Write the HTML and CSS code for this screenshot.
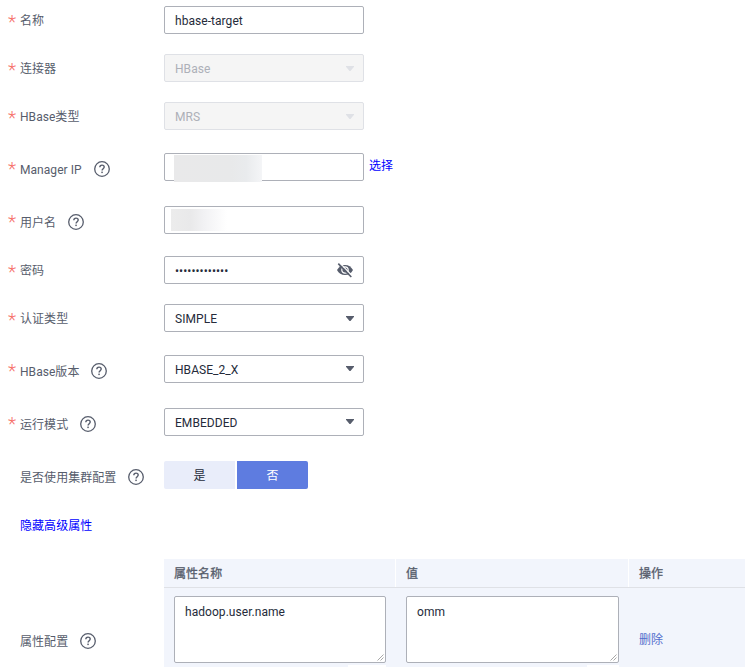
FILE: index.html
```html
<!DOCTYPE html>
<html lang="zh-CN">
<head>
<meta charset="utf-8">
<title>hbase-target</title>
<link rel="stylesheet" href="styles.css">
</head>
<body>
<svg class="defs" width="0" height="0" aria-hidden="true">
  <symbol id="help" viewBox="0 0 16 16">
    <circle cx="8" cy="8" r="7.3" fill="none" stroke="currentColor" stroke-width="1.3"/>
    <path d="M5.8 6.3C5.8 4.9 6.7 4.1 8 4.1s2.2.8 2.2 2c0 1.5-2.1 1.7-2.1 3.3" fill="none" stroke="currentColor" stroke-width="1.4"/>
    <rect x="7.3" y="10.6" width="1.5" height="1.5" fill="currentColor"/>
  </symbol>
  <symbol id="caret" viewBox="0 0 8 5">
    <path d="M0 0h8v.8L4.5 5h-1L0 .8z" fill="currentColor"/>
  </symbol>
  <symbol id="grip" viewBox="0 0 7 7">
    <path d="M.5 6.5l6-6M3.5 6.5l3-3" fill="none" stroke="currentColor" stroke-width="1"/>
  </symbol>
</svg>
<form class="form">
  <div class="row"><label class="label"><i class="req"></i>名称</label><div class="field">hbase-target</div></div>
  <div class="row"><label class="label"><i class="req"></i>连接器</label><div class="field disabled">HBase<svg class="caret"><use href="#caret"/></svg></div></div>
  <div class="row gap-23"><label class="label"><i class="req"></i>HBase类型</label><div class="field disabled">MRS<svg class="caret"><use href="#caret"/></svg></div></div>
  <div class="row gap-25"><label class="label with-help"><i class="req"></i>Manager IP<svg class="help"><use href="#help"/></svg></label><div class="field"><span class="mask mask-ip"></span></div><a class="link choose">选择</a></div>
  <div class="row gap-22"><label class="label with-help"><i class="req"></i>用户名<svg class="help"><use href="#help"/></svg></label><div class="field"><span class="mask mask-user"></span></div></div>
  <div class="row"><label class="label"><i class="req"></i>密码</label><div class="field">•••••••••••••
    <svg class="eye" viewBox="0 0 18 16"><path d="M1 8C2.7 4.7 5.5 2.9 9 2.9S15.3 4.7 17 8C15.3 11.3 12.5 13.1 9 13.1S2.7 11.3 1 8z" fill="#575d6c"/><circle cx="9" cy="8" r="3.2" fill="none" stroke="#fff" stroke-width="1.2"/><path d="M3.4.6l13 13.4" stroke="#fff" stroke-width="1.3"/><path d="M2.3 1.6l13 13.4" stroke="#575d6c" stroke-width="1.6"/></svg></div></div>
  <div class="row gap-23"><label class="label"><i class="req"></i>认证类型</label><div class="field">SIMPLE<svg class="caret"><use href="#caret"/></svg></div></div>
  <div class="row gap-25"><label class="label with-help"><i class="req"></i>HBase版本<svg class="help"><use href="#help"/></svg></label><div class="field">HBASE_2_X<svg class="caret raised"><use href="#caret"/></svg></div></div>
  <div class="row gap-25"><label class="label with-help"><i class="req"></i>运行模式<svg class="help"><use href="#help"/></svg></label><div class="field">EMBEDDED<svg class="caret raised"><use href="#caret"/></svg></div></div>
  <div class="row"><label class="label with-help">是否使用集群配置<svg class="help"><use href="#help"/></svg></label><div class="toggle"><span class="option">是</span><span class="option selected">否</span></div></div>
  <div class="row"><a class="link advanced">隐藏高级属性</a></div>
  <div class="row properties">
    <label class="label">属性配置<svg class="help"><use href="#help"/></svg></label>
    <div class="table">
      <div class="cell head">属性名称</div><div class="cell head">值</div><div class="cell head last">操作</div>
      <div class="cell"><div class="area">hadoop.user.name<svg class="grip"><use href="#grip"/></svg></div><span class="stub wide"></span></div>
      <div class="cell"><div class="area">omm<svg class="grip"><use href="#grip"/></svg></div><span class="stub"></span></div>
      <div class="cell action">删除</div>
    </div>
  </div>
</form>
</body>
</html>
```
FILE: styles.css
```css
* { box-sizing: border-box; }

body {
  margin: 0;
  height: 667px;
  overflow: hidden;
  background: #fff;
  color: #252b3a;
  font: 12px/18px Roboto, "Noto Sans CJK SC", sans-serif;
  letter-spacing: .05px;
}

.defs { position: absolute; }

.form { padding-top: 6px; }

.row {
  display: flex;
  height: 28px;
  margin-bottom: 20px;
}
.gap-22 { margin-bottom: 22px; }
.gap-23 { margin-bottom: 23px; }
.gap-25 { margin-bottom: 25px; }

.label {
  position: relative;
  display: flex;
  align-items: center;
  flex: none;
  width: 164px;
  padding: 2px 0 0 20px;
  color: #575d6c;
}
.with-help { padding-top: 5px; }

.req {
  position: absolute;
  left: 8px;
  top: 7px;
  width: 8px;
  height: 9px;
}
.req::before {
  content: "*";
  display: block;
  color: #f66f6a;
  font: 300 19px/18px Roboto, sans-serif;
}

.help {
  width: 16px;
  height: 16px;
  margin: 0 0 2px 12px;
  overflow: visible;
}

.field {
  position: relative;
  display: flex;
  align-items: center;
  flex: none;
  width: 200px;
  padding: 2px 10px 0;
  border: 1px solid #adb0b8;
  border-radius: 2px;
  background: #fff;
}
.disabled {
  border-color: #dfe1e6;
  background: #f5f5f5;
  color: #adb0b8;
}

.caret {
  width: 8px;
  height: 5px;
  margin: 0 -1px 2px auto;
  color: #575d6c;
}
.disabled .caret { color: #dfe1e6; }
.raised { margin-bottom: 3px; }

.eye {
  width: 18px;
  height: 16px;
  margin: 0 -1px 2px auto;
}

.mask { position: absolute; }
.mask-ip {
  left: 9px;
  top: 1px;
  width: 88px;
  height: 27px;
  background: linear-gradient(90deg, #e9e9ea, #e8e9ea 65%, #e9ebed 82%, #f4f5f7);
}
.mask-user {
  left: 6px;
  top: 2px;
  width: 56px;
  height: 22px;
  background: linear-gradient(90deg, #ececec, #e9e9ea 35%, #f2f2f4 60%, #fff);
}

.link { color: #00f; }
.choose { margin: 4px 0 0 5px; }
.advanced { padding: 8px 0 0 20px; }

.toggle {
  display: flex;
  gap: 2px;
}
.option {
  width: 71px;
  border-radius: 2px 0 0 2px;
  background: #e9edfa;
  line-height: 30px;
  text-align: center;
}
.selected {
  border-radius: 0 2px 2px 0;
  background: #5e7ce0;
  color: #fff;
}

.properties {
  height: 108px;
  margin: 22px 0 0;
}
.properties .label { padding-top: 58px; }

.table {
  display: grid;
  grid-template-columns: 232px 233px 116px;
  grid-template-rows: 29px 79px;
  background: #f2f5fc;
}
.cell { padding: 8px 10px 0; }
.head {
  padding-top: 6px;
  border-bottom: 1px solid #dfe1e6;
  box-shadow: inset -1px 0 #fff;
  color: #575d6c;
  -webkit-text-stroke: .3px #575d6c;
}
.last { box-shadow: none; }
.area {
  position: relative;
  height: 67px;
  padding: 6px 10px;
  border: 1px solid #adb0b8;
  border-radius: 2px;
  background: #fff;
}
.grip {
  position: absolute;
  right: 1px;
  bottom: 1px;
  width: 7px;
  height: 7px;
  color: #a8a8a8;
}
.stub {
  display: block;
  width: 32px;
  height: 4px;
  margin: 2px 0 0 auto;
  background: #fff;
}
.wide { width: 38px; }
.action {
  padding-top: 43px;
  color: #526ecc;
}
```
